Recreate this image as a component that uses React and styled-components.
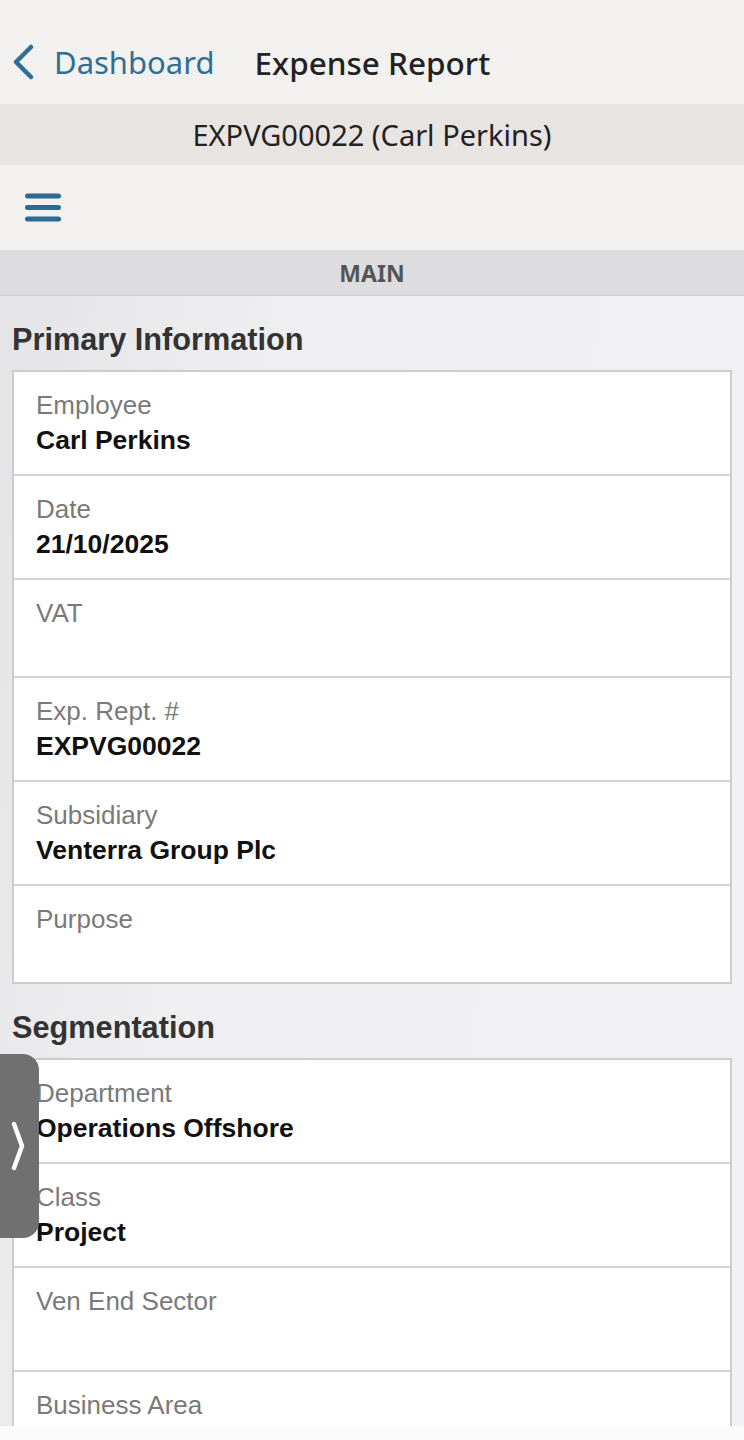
import React from 'react';
import styled, { createGlobalStyle } from 'styled-components';

const GlobalStyle = createGlobalStyle`
  body {
    margin: 0;
    background: #efeef0;
    font-family: "Liberation Sans", Arial, sans-serif;
  }
`;

const Screen = styled.div`
  position: relative;
  width: 744px;
  height: 1440px;
  display: flex;
  flex-direction: column;
  overflow: hidden;
  background: #efeef0;
`;

const NavBar = styled.header`
  height: 104px;
  box-sizing: border-box;
  padding: 20px 0 0 12px;
  display: flex;
  align-items: center;
  background: #f3f1f0;
  font-family: "Noto Sans", "Open Sans", sans-serif;
`;

const BackLink = styled.a`
  display: flex;
  align-items: center;
  gap: 20px;
  color: #2f6f96;
  font-size: 31px;
  text-decoration: none;
`;

const Title = styled.h1`
  margin: 0 0 0 40px;
  font-size: 31.5px;
  font-weight: 500;
  color: #222;
`;

const RecordBar = styled.div`
  height: 61px;
  display: flex;
  align-items: center;
  justify-content: center;
  background: #e7e4e2;
  color: #222;
  font-family: "Noto Sans", "Open Sans", sans-serif;
  font-size: 29px;
`;

const Toolbar = styled.div`
  height: 85px;
  display: flex;
  align-items: center;
  padding-left: 25px;
  background: #f3f1f0;
`;

const TabBand = styled.div`
  height: 45px;
  display: flex;
  align-items: center;
  justify-content: center;
  background: #dddcdf;
  border-bottom: 1px solid #cfcfd2;
  color: #555;
  font-family: "Noto Sans", "Open Sans", sans-serif;
  font-size: 23px;
  font-weight: 700;
`;

const Content = styled.main`
  flex: 1;
  overflow: hidden;
  padding: 0 12px;
  background: linear-gradient(100deg, #e4e4e6 0%, #efeef0 30%, #f2f1f3 100%);
`;

const SectionTitle = styled.h2`
  margin: 0;
  padding: 26px 0 12px;
  line-height: 36px;
  font-size: 30.7px;
  font-weight: 700;
  color: #333;
`;

const Card = styled.section`
  background: #fff;
  border: 2px solid #cdcdcf;
`;

const Row = styled.div`
  padding: 18px 22px;
  border-top: 2px solid #d2d2d4;
  &:first-child {
    border-top: none;
  }
`;

const Label = styled.div`
  line-height: 30px;
  font-size: 26px;
  color: #7a7a7a;
`;

const Value = styled.div`
  margin-top: 4px;
  height: ${p => (p.$tight ? '26px' : '32px')};
  line-height: 32px;
  font-size: 26.5px;
  font-weight: 700;
  color: #111;
`;

const Footer = styled.div`
  height: 14px;
  background: #fbfbfb;
`;

const SideTab = styled.button`
  position: absolute;
  left: 0;
  top: 1054px;
  width: 39px;
  height: 184px;
  padding: 0 4px 0 0;
  border: none;
  border-radius: 0 16px 16px 0;
  background: #707070;
  display: flex;
  align-items: center;
  justify-content: center;
`;

const BackIcon = () => (
  <svg width="22" height="36" viewBox="0 0 22 36">
    <polyline points="19,3 4,18 19,33" fill="none" stroke="#2f6f96" strokeWidth="4.5" strokeLinecap="round" strokeLinejoin="round" />
  </svg>
);

const MenuIcon = () => (
  <svg width="36" height="29" viewBox="0 0 36 29">
    {[3, 14.5, 26].map(y => (
      <line key={y} x1="2.5" y1={y} x2="33.5" y2={y} stroke="#2d6a8f" strokeWidth="5" strokeLinecap="round" />
    ))}
  </svg>
);

const PanelIcon = () => (
  <svg width="14" height="52" viewBox="0 0 14 52">
    <polyline points="3,4 11,26 3,48" fill="none" stroke="#fff" strokeWidth="4.5" strokeLinecap="round" strokeLinejoin="round" />
  </svg>
);

const primary = [
  { label: 'Employee', value: 'Carl Perkins' },
  { label: 'Date', value: '21/10/2025' },
  { label: 'VAT', value: '', tight: true },
  { label: 'Exp. Rept. #', value: 'EXPVG00022' },
  { label: 'Subsidiary', value: 'Venterra Group Plc' },
  { label: 'Purpose', value: '', tight: true },
];

const segmentation = [
  { label: 'Department', value: 'Operations Offshore' },
  { label: 'Class', value: 'Project' },
  { label: 'Ven End Sector', value: '' },
  { label: 'Business Area', value: '' },
];

const Section = ({ title, fields }) => (
  <>
    <SectionTitle>{title}</SectionTitle>
    <Card>
      {fields.map(f => (
        <Row key={f.label}>
          <Label>{f.label}</Label>
          <Value $tight={f.tight}>{f.value}</Value>
        </Row>
      ))}
    </Card>
  </>
);

const App = () => (
  <Screen>
    <GlobalStyle />
    <NavBar>
      <BackLink>
        <BackIcon />
        Dashboard
      </BackLink>
      <Title>Expense Report</Title>
    </NavBar>
    <RecordBar>EXPVG00022 (Carl Perkins)</RecordBar>
    <Toolbar>
      <MenuIcon />
    </Toolbar>
    <TabBand>MAIN</TabBand>
    <Content>
      <Section title="Primary Information" fields={primary} />
      <Section title="Segmentation" fields={segmentation} />
    </Content>
    <Footer />
    <SideTab aria-label="Open panel">
      <PanelIcon />
    </SideTab>
  </Screen>
);

export default App;
